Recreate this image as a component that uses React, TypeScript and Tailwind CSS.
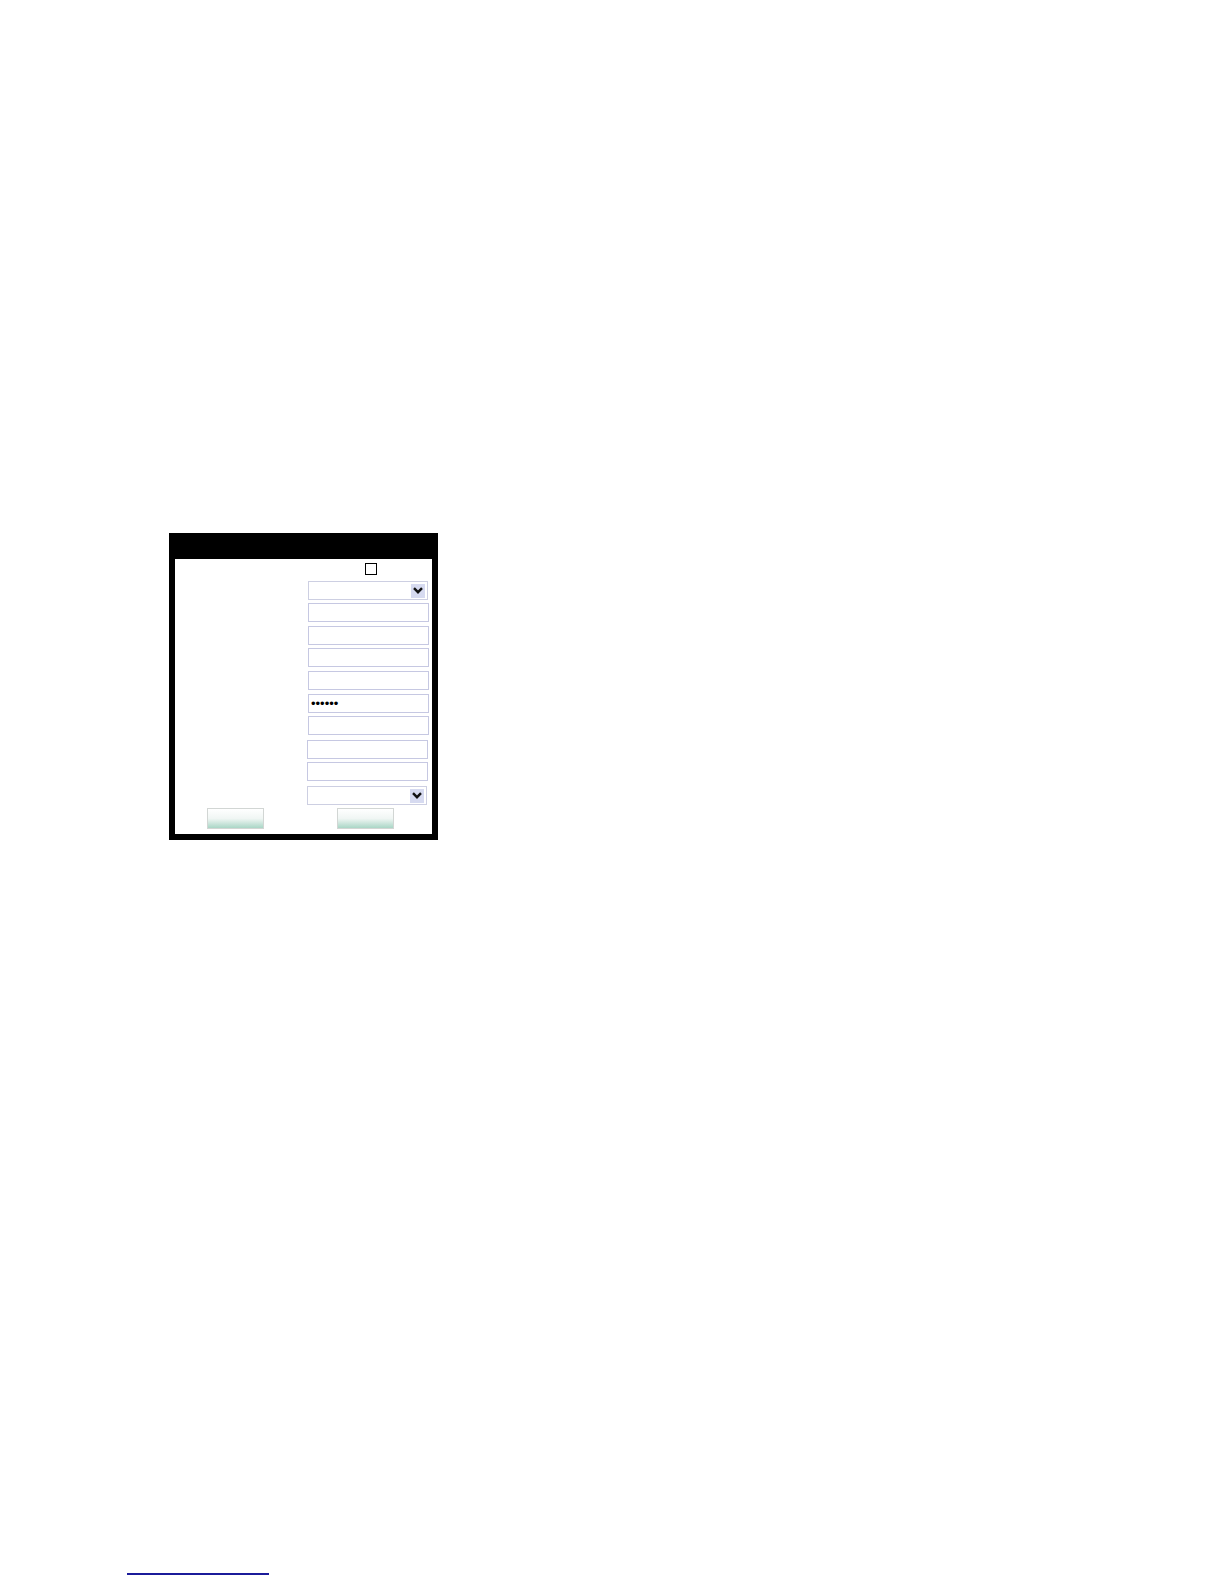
const fields = [
  { kind: 'select', cls: 'mt-[1px] ml-0' },
  { kind: 'text', cls: 'mt-[3px] ml-0' },
  { kind: 'text', cls: 'mt-[4px] ml-0' },
  { kind: 'text', cls: 'mt-[3px] ml-0' },
  { kind: 'text', cls: 'mt-[4px] ml-0' },
  { kind: 'password', cls: 'mt-[4px] ml-0' },
  { kind: 'text', cls: 'mt-[3px] ml-0' },
  { kind: 'text', cls: 'mt-[5px] -ml-[1px]' },
  { kind: 'text', cls: 'mt-[3px] -ml-[1px]' },
  { kind: 'select', cls: 'mt-[5px] -ml-[1px]' },
]

const Chevron = () => (
  <svg width="10" height="7" viewBox="0 0 10 7">
    <path d="M1 1.2 L5 5.2 L9 1.2" fill="none" stroke="#111" strokeWidth="2.4" />
  </svg>
)

const Field = ({ kind, cls }: { kind: string; cls: string }) => {
  if (kind === 'select') {
    return (
      <div className={`${cls} flex h-[19px] w-[120px] items-center justify-end border border-[#cdcfe2] bg-white pr-[2px]`}>
        <div className="flex h-[14px] w-[14px] items-center justify-center bg-[#d6daf0]">
          <Chevron />
        </div>
      </div>
    )
  }
  return (
    <input
      type={kind}
      defaultValue={kind === 'password' ? 'abcdef' : ''}
      readOnly
      className={`${cls} block h-[19px] w-[121px] border border-[#c6c8e2] bg-white px-[2px] text-[13px] leading-none text-black outline-none font-['Liberation_Sans',sans-serif]`}
    />
  )
}

const App = () => {
  return (
    <div className="min-h-[1584px] bg-white pt-[533px] font-['Liberation_Sans',Arial,sans-serif]">
      <div className="ml-[169px] w-[269px] bg-black px-[6px] pb-[6px] pt-[26px]">
        <div className="h-[275px] bg-white">
          <div className="ml-[133px] flex w-[125px] flex-col">
            <div className="flex h-[21px] items-start justify-center pt-[4px]">
              <div className="h-[12px] w-[12px] border border-black bg-white" />
            </div>
            {fields.map((f, i) => (
              <Field key={i} kind={f.kind} cls={f.cls} />
            ))}
          </div>
          <div className="mt-[3px] flex">
            <button className="ml-[32px] h-[21px] w-[57px] border border-[#d2d6d4] bg-gradient-to-b from-white via-[#f0f6f4] to-[#a9d6c6]" />
            <button className="ml-[73px] h-[21px] w-[57px] border border-[#d2d6d4] bg-gradient-to-b from-white via-[#f0f6f4] to-[#a9d6c6]" />
          </div>
        </div>
      </div>
      <div className="ml-[127px] mt-[733px] h-[2px] w-[142px] bg-[#1b1b9a]" />
    </div>
  )
}

export default App
